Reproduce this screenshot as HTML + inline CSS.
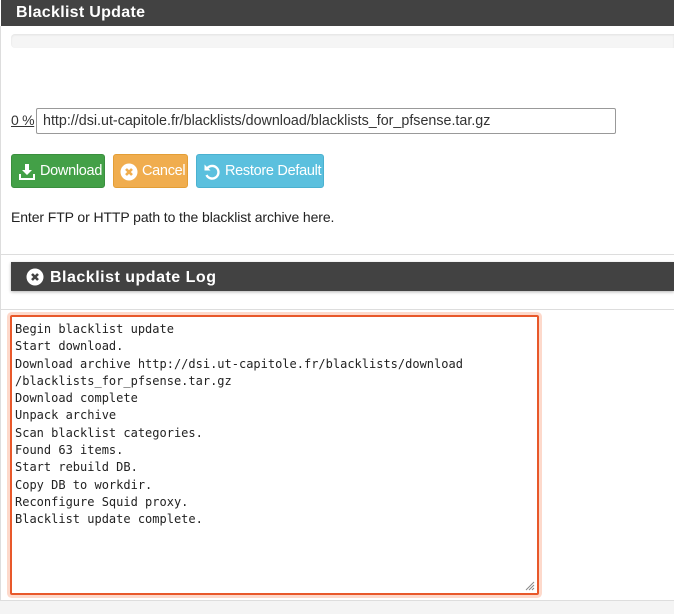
<!DOCTYPE html>
<html><head><meta charset="utf-8"><style>
*{box-sizing:border-box;margin:0;padding:0}
body{width:674px;height:614px;overflow:hidden;background:#fff;font-family:"Liberation Sans",sans-serif;font-size:14px;color:#212121;position:relative}
.abs{position:absolute}
.hdr{left:1px;top:0;width:673px;height:26px;background:#424242;color:#fff;font-size:16px;font-weight:bold;padding:4px 0 0 15px;letter-spacing:.3px}
.lb{left:0;top:26px;width:1px;height:574px;background:#ddd}
.prog{left:11px;top:34px;width:663px;height:14px;background:#f5f5f5;border-radius:4px 0 0 4px;box-shadow:inset 0 1px 2px rgba(0,0,0,.08)}
.pct{left:11px;top:112px;font-size:14px;text-decoration:underline;color:#333;letter-spacing:-.3px}
.inp{left:36px;top:108px;width:580px;height:26px;border:1px solid #999;border-radius:2px;padding:4px 0 0 6px;font-size:14.3px;color:#333;white-space:nowrap}
.btn{top:154px;height:34px;border-radius:3px;color:#fff;font-size:14.5px;padding:8px 0 0 0;display:flex;align-items:flex-start;white-space:nowrap;letter-spacing:-.3px;overflow:hidden}
.btn svg{margin:0 4px 0 6px;flex-shrink:0}
.txt{left:11px;top:209px;font-size:14px;color:#212121;letter-spacing:-.1px}
.line{left:0;width:674px;height:1px;background:#ddd}
.lh{left:11px;top:262px;width:663px;height:29px;background:#424242;color:#fff;font-weight:bold;font-size:16px;padding:7px 0 0 39px;letter-spacing:.5px;box-shadow:0 1px 3px rgba(0,0,0,.3)}
.ta{left:10px;top:315px;width:529px;height:280px;border:2px solid #e8582a;border-radius:2px;box-shadow:0 0 0 3px #fdd9cb;font-family:"DejaVu Sans Mono",monospace;font-size:12px;line-height:17.3px;padding:4px 0 0 3px;white-space:pre;color:#222}
.foot{left:0;top:600px;width:674px;height:14px;background:#f4f4f4;border-top:1px solid #ddd}
</style></head><body>
<div class="abs hdr">Blacklist Update</div>
<div class="abs lb"></div>
<div class="abs prog"></div>
<div class="abs pct">0 %</div>
<div class="abs inp">http://dsi.ut-capitole.fr/blacklists/download/blacklists_for_pfsense.tar.gz</div>
<div class="abs btn" style="left:11px;width:94px;background:#43a047;border:1px solid #3a8f3e">
<svg width="18" height="18" viewBox="0 0 18 18"><path d="M7 1h4v6h3l-5 5-5-5h3z" fill="#fff"/><path d="M1 11v6h16v-6h-2v4H3v-4z" fill="#fff"/></svg>Download</div>
<div class="abs btn" style="left:113px;width:75px;background:#f0ad4e;border:1px solid #e39e36">
<svg width="18" height="18" viewBox="0 0 18 18"><circle cx="9" cy="9" r="8.5" fill="#fff"/><path d="M6 6l6 6M12 6l-6 6" stroke="#f0ad4e" stroke-width="2.6"/></svg>Cancel</div>
<div class="abs btn" style="left:196px;width:128px;background:#5bc0de;border:1px solid #4bb1d0">
<svg width="18" height="18" viewBox="0 0 18 18"><path d="M4.5 5A6.3 6.3 0 1 1 3.5 12" fill="none" stroke="#fff" stroke-width="2.4"/><path d="M1.5 1.5v6h6z" fill="#fff"/></svg>Restore Default</div>
<div class="abs txt">Enter FTP or HTTP path to the blacklist archive here.</div>
<div class="abs line" style="top:254px"></div>
<div class="abs lh">Blacklist update Log</div>
<svg class="abs" style="left:26px;top:268px" width="18" height="18" viewBox="0 0 18 18"><circle cx="9" cy="9" r="8.5" fill="#fff"/><path d="M6 6l6 6M12 6l-6 6" stroke="#424242" stroke-width="2.6"/></svg>
<div class="abs line" style="top:309px"></div>
<div class="abs ta">Begin blacklist update
Start download.
Download archive http://dsi.ut-capitole.fr/blacklists/download
/blacklists_for_pfsense.tar.gz
Download complete
Unpack archive
Scan blacklist categories.
Found 63 items.
Start rebuild DB.
Copy DB to workdir.
Reconfigure Squid proxy.
Blacklist update complete.</div>
<svg class="abs" style="left:524px;top:580px" width="11" height="11" viewBox="0 0 11 11"><path d="M10 2L2 10M10 5L5 10M10 8L8 10" stroke="#888" stroke-width="1"/></svg>
<div class="abs foot"></div>
</body></html>
